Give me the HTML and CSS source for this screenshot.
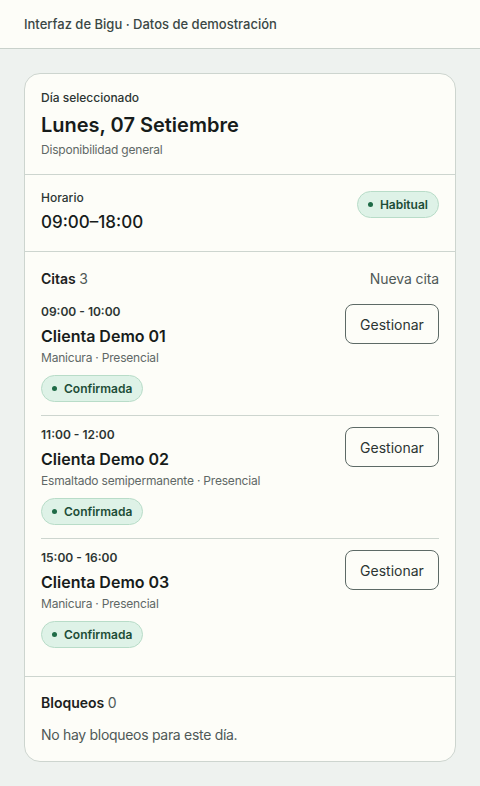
FILE: index.html
```html
<!DOCTYPE html>
<html lang="es">

<head>
    <meta charset="UTF-8">
    <meta name="viewport" content="width=device-width,initial-scale=1.0">
    <title>Bigu - Día seleccionado</title>
    <link rel="stylesheet" href="styles.css">
</head>

<body>
    <header class="topbar">Interfaz de Bigu · Datos de demostración</header>

    <main class="page">
        <div class="card">
            <section class="section day">
                <span class="label">Día seleccionado</span>
                <h1 class="day-title">Lunes, 07 Setiembre</h1>
                <span class="muted">Disponibilidad general</span>
            </section>

            <section class="section schedule">
                <div>
                    <span class="label">Horario</span>
                    <div class="hours">09:00–18:00</div>
                </div>
                <span class="badge">Habitual</span>
            </section>

            <section class="section">
                <div class="section-head">
                    <span class="head-title">Citas <span class="count">3</span></span>
                    <a class="link" href="#">Nueva cita</a>
                </div>

                <div class="appointment">
                    <div class="info">
                        <span class="time">09:00 - 10:00</span>
                        <span class="client">Clienta Demo 01</span>
                        <span class="muted">Manicura · Presencial</span>
                        <span class="badge">Confirmada</span>
                    </div>
                    <button type="button">Gestionar</button>
                </div>

                <div class="appointment">
                    <div class="info">
                        <span class="time">11:00 - 12:00</span>
                        <span class="client">Clienta Demo 02</span>
                        <span class="muted">Esmaltado semipermanente · Presencial</span>
                        <span class="badge">Confirmada</span>
                    </div>
                    <button type="button">Gestionar</button>
                </div>

                <div class="appointment">
                    <div class="info">
                        <span class="time">15:00 - 16:00</span>
                        <span class="client">Clienta Demo 03</span>
                        <span class="muted">Manicura · Presencial</span>
                        <span class="badge">Confirmada</span>
                    </div>
                    <button type="button">Gestionar</button>
                </div>
            </section>

            <section class="section blocks">
                <span class="head-title">Bloqueos <span class="count">0</span></span>
                <p class="empty">No hay bloqueos para este día.</p>
            </section>
        </div>
    </main>
</body>

</html>
```

FILE: styles.css
```css
* {
    margin: 0;
    padding: 0;
    box-sizing: border-box;
}

body {
    font-family: 'Inter', 'Noto Sans', sans-serif;
    background-color: #eef2ef;
    color: #1c2120;
    min-height: 100vh;
}

.topbar {
    height: 49px;
    padding: 0 24px 1px;
    display: flex;
    align-items: center;
    background-color: #fdfdf8;
    border-bottom: 1px solid #c9d1cb;
    font-size: 13px;
    font-weight: 500;
    color: #3a4745;
}

.page {
    padding: 24px 24px;
}

.card {
    background-color: #fdfdf8;
    border: 1px solid #cdd5cf;
    border-radius: 16px;
    overflow: hidden;
}

.section {
    padding: 16px 16px;
    border-bottom: 1px solid #cdd5cf;
}

.section:last-child {
    border-bottom: none;
}

.day {
    display: flex;
    flex-direction: column;
}

.label {
    display: block;
    font-size: 12px;
    font-weight: 500;
    line-height: 16px;
    color: #2c3533;
}

.day-title {
    margin-top: 5px;
    font-size: 20px;
    font-weight: 600;
    line-height: 28px;
    color: #171c1b;
}

.muted {
    font-size: 12px;
    line-height: 16px;
    letter-spacing: -0.2px;
    color: #5f6866;
}

.day .muted {
    margin-top: 3px;
}

.schedule {
    display: flex;
    justify-content: space-between;
    align-items: flex-start;
    padding-top: 15px;
    padding-bottom: 17px;
}

.hours {
    margin-top: 4px;
    font-size: 17px;
    font-weight: 500;
    line-height: 24px;
    color: #171c1b;
}

.badge {
    display: inline-flex;
    align-items: center;
    gap: 7px;
    height: 27px;
    padding: 0 10px;
    border-radius: 14px;
    background-color: #def2e7;
    border: 1px solid #b8dcc8;
    font-size: 12px;
    font-weight: 600;
    letter-spacing: 0;
    color: #1d4d37;
}

.badge::before {
    content: "";
    width: 5px;
    height: 5px;
    border-radius: 50%;
    background-color: #1f6b47;
}

.schedule .badge {
    margin-top: 1px;
}

.section-head {
    display: flex;
    justify-content: space-between;
    align-items: center;
    margin-top: 1px;
    margin-bottom: 4px;
}

.head-title {
    display: block;
    font-size: 14px;
    font-weight: 600;
    line-height: 20px;
    color: #1c2120;
}

.count {
    font-weight: 400;
    color: #4f5957;
}

.link {
    font-size: 14px;
    line-height: 20px;
    letter-spacing: -0.1px;
    color: #4f5957;
    text-decoration: none;
}

.appointment {
    display: flex;
    justify-content: space-between;
    align-items: flex-start;
    padding: 11px 0 13px;
    border-bottom: 1px solid #cdd5cf;
}

.appointment:last-child {
    border-bottom: none;
    padding-bottom: 12px;
}

.info {
    display: flex;
    flex-direction: column;
    align-items: flex-start;
}

.time {
    font-size: 12px;
    font-weight: 600;
    line-height: 16px;
    color: #2c3533;
}

.client {
    margin-top: 5px;
    font-size: 16px;
    font-weight: 600;
    line-height: 22px;
    color: #171c1b;
}

.info .muted {
    margin-top: 3px;
}

.info .badge {
    margin-top: 9px;
}

button {
    width: 94px;
    height: 40px;
    border: 1px solid #5d6a66;
    border-radius: 8px;
    background-color: #fdfdf8;
    font-family: inherit;
    font-size: 14px;
    color: #2c3533;
    cursor: pointer;
}

.empty {
    margin-top: 12px;
    font-size: 14px;
    line-height: 20px;
    letter-spacing: -0.3px;
    color: #4f5957;
}
```
